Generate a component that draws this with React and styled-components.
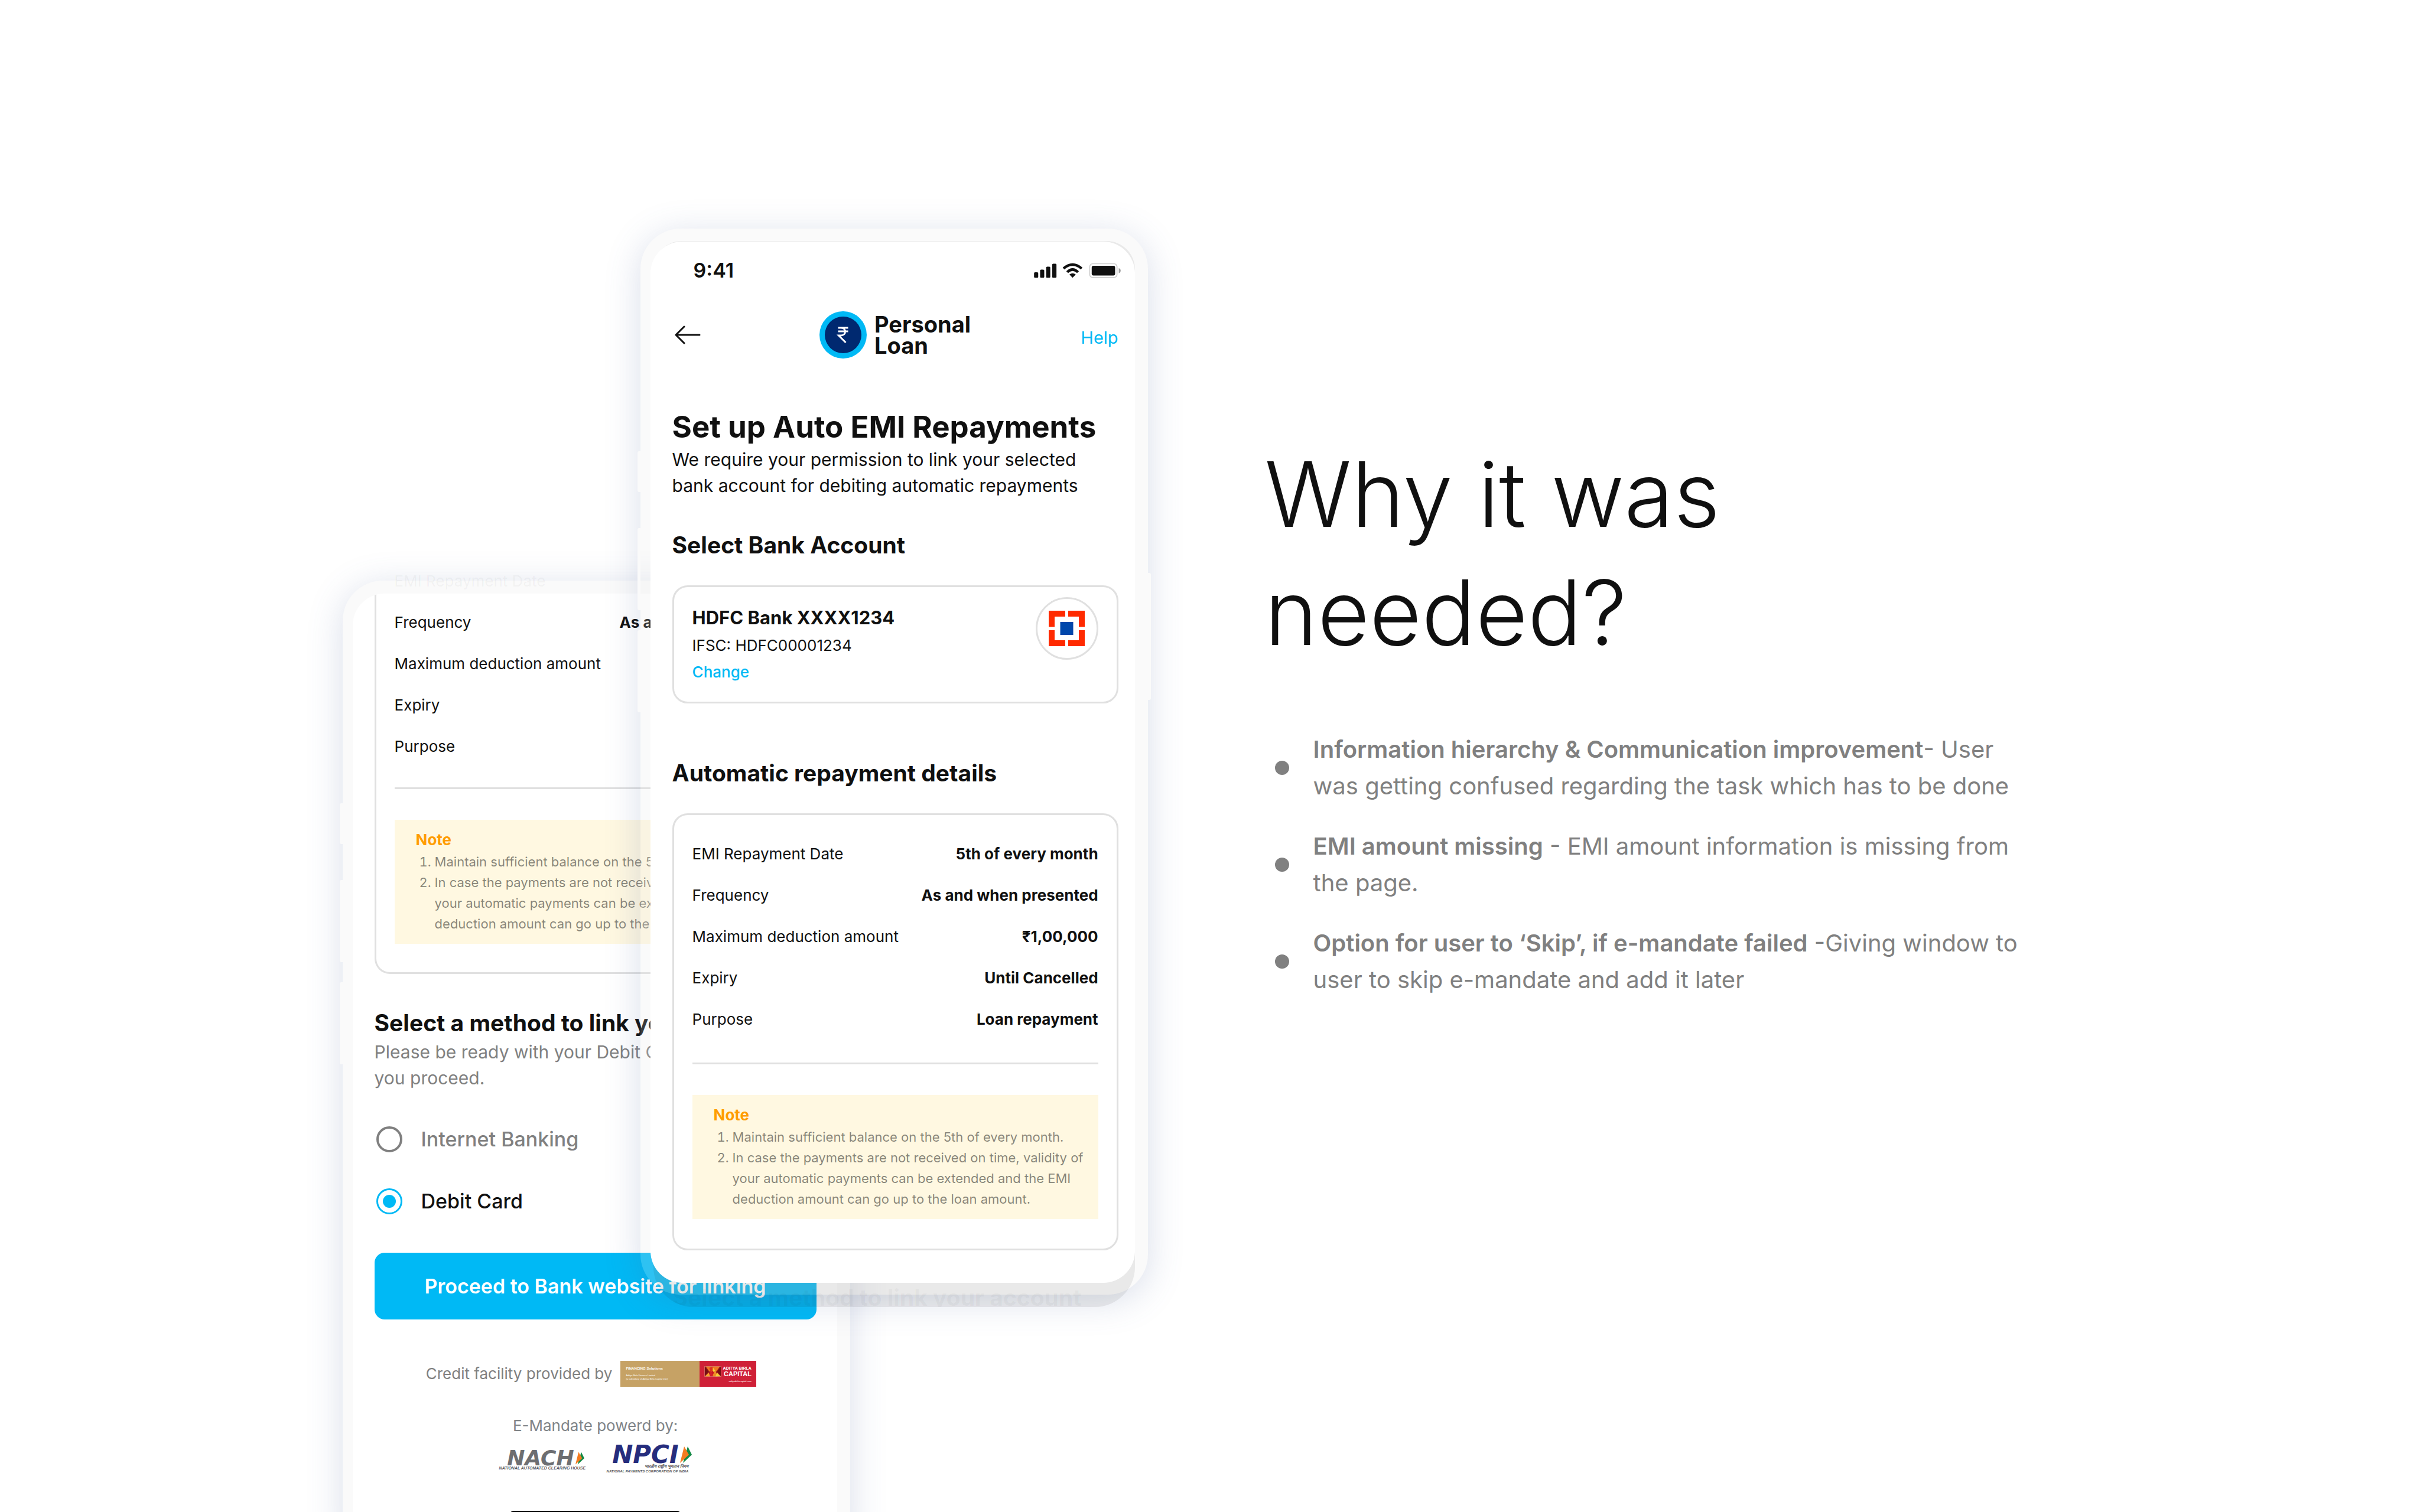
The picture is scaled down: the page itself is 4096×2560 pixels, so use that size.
import React from "react";
import styled, { createGlobalStyle } from "styled-components";

const ink = "#101010";
const grey = "#808080";
const sky = "#00b9f5";
const line = "#e0e0e0";

const Global = createGlobalStyle`
  *, *::before, *::after { box-sizing: border-box; }
  html, body { margin: 0; background: #fff; }
  body { font-family: Inter, "Liberation Sans", sans-serif; color: ${ink}; overflow: hidden; }
  h1, h2, h3, p, ul, ol { margin: 0; padding: 0; font-weight: inherit; }
`;

const Page = styled.main`
  display: flex;
  align-items: flex-start;
  height: 100vh;
  padding-left: 14.15vw;
  overflow: hidden;
`;

/* Phone shell */

const Phone = styled.section`
  position: relative;
  isolation: isolate;
  flex: none;
  width: 859px;
  margin-top: ${(p) => p.$top}px;
  margin-left: ${(p) => p.$shift || 0}px;
  padding: 22px 22px 20px 17px;
  border-radius: 68px;
  background: rgba(230, 230, 230, 0.2);
  box-shadow: 0 10px 60px rgba(80, 105, 160, 0.22);
`;

const SideKey = styled.span`
  position: absolute;
  ${(p) => (p.$right ? "left: 100%;" : "right: 100%;")}
  top: ${(p) => p.$top}px;
  width: 5px;
  height: ${(p) => p.$size}px;
  border-radius: ${(p) => (p.$right ? "0 3px 3px 0" : "3px 0 0 3px")};
  background: #fafafa;
`;

const Screen = styled.div`
  display: flex;
  flex-direction: column;
  padding: 0 ${(p) => p.$right}px 55px 37px;
  border-radius: 54px;
  background: #fff;
  overflow: hidden;
`;

const Underlay = styled.div`
  position: absolute;
  z-index: -1;
  inset: 21px 22px -21px;
  display: flex;
  align-items: flex-end;
  padding-left: 33px;
  border-radius: 48px 48px 68px 68px;
  background: rgba(16, 16, 16, 0.07);
  color: rgba(16, 16, 16, 0.05);
  overflow: hidden;
`;

const UnderlayTitle = styled.p`
  margin-bottom: -8px;
  font-size: 39px;
  font-weight: 700;
  line-height: 48px;
  white-space: nowrap;
`;

const GhostLabel = styled.span`
  position: absolute;
  z-index: -1;
  top: -24px;
  left: 88px;
  font-size: 26px;
  line-height: 50px;
  color: rgba(16, 16, 16, 0.05);
`;

/* Header */

const StatusBar = styled.div`
  display: flex;
  justify-content: space-between;
  align-items: center;
  margin: 29px -4px 49px 36px;
  font-size: 34px;
  font-weight: 600;
  line-height: 40px;
`;

const AppBar = styled.header`
  display: grid;
  grid-template-columns: 1fr auto 1fr;
  align-items: center;
  margin-bottom: 86px;
`;

const BackButton = styled.button`
  display: flex;
  justify-self: start;
  margin: 0;
  padding: 0 4px;
  border: 0;
  background: none;
  color: ${ink};
`;

const Brand = styled.div`
  display: flex;
  align-items: center;
  gap: 13px;
  font-size: 38px;
  font-weight: 700;
  line-height: 36px;
`;

const HelpLink = styled.a`
  justify-self: end;
  padding-top: 10px;
  font-size: 29px;
  line-height: 40px;
  color: ${sky};
  text-decoration: none;
`;

/* Text */

const Title = styled.h2`
  font-size: 51px;
  font-weight: 700;
  line-height: 60px;
  white-space: nowrap;
`;

const Lead = styled.p`
  margin-top: 3px;
  font-size: 30px;
  line-height: 44px;
  white-space: nowrap;
  color: ${(p) => (p.$muted ? grey : ink)};
`;

const Heading = styled.h3`
  margin-top: ${(p) => p.$top || 0}px;
  font-size: 39px;
  font-weight: 700;
  line-height: 48px;
  white-space: nowrap;
`;

/* Cards */

const Card = styled.div`
  margin-top: 44px;
  padding: 31px 31px 50px;
  border: 3px solid ${line};
  border-radius: 26px;
`;

const CutCard = styled(Card)`
  margin-top: 0;
  padding: 14px 31px 48px;
  border-top: 0;
  border-radius: 0 0 26px 26px;
`;

const AccountCard = styled(Card)`
  display: flex;
  justify-content: space-between;
  align-items: flex-start;
  padding: 17px 31px 29px;
`;

const Account = styled.div`
  padding-top: 12px;
  font-size: 26px;
`;

const BankName = styled.p`
  font-size: 31px;
  font-weight: 700;
  line-height: 46px;
`;

const Ifsc = styled.p`
  line-height: 48px;
`;

const ChangeLink = styled.a`
  display: block;
  font-weight: 500;
  line-height: 42px;
  color: ${sky};
  text-decoration: none;
`;

const BankBadge = styled.div`
  display: grid;
  place-items: center;
  width: 106px;
  height: 106px;
  border: 3px solid ${line};
  border-radius: 50%;
`;

const Details = styled.table`
  width: 100%;
  border-collapse: collapse;
  font-size: 26px;
  line-height: 70px;

  th, td { padding: 0; white-space: nowrap; }
  th { font-weight: 400; text-align: left; }
  td { font-weight: 700; text-align: right; }
`;

const Divider = styled.hr`
  width: 100%;
  height: 3px;
  margin: ${(p) => p.$top}px 0 52px;
  border: 0;
  background: ${line};
`;

const NoteBox = styled.aside`
  padding: 16px 0 16px 36px;
  background: #fff8e1;
`;

const NoteTitle = styled.p`
  margin-bottom: 2px;
  font-size: 26px;
  font-weight: 700;
  line-height: 36px;
  color: #ff9d00;
`;

const NoteList = styled.ol`
  padding-left: 32px;
  font-size: 22px;
  line-height: 35px;
  white-space: nowrap;
  color: rgba(16, 16, 16, 0.5);
`;

/* Payment method */

const Methods = styled.fieldset`
  display: grid;
  gap: 45px;
  margin: 52px 0 57px;
  padding: 0 3px;
  border: 0;
`;

const Method = styled.label`
  display: flex;
  align-items: center;
  gap: 32px;
  font-size: 34px;
  font-weight: 500;
  line-height: 60px;
  color: ${grey};

  &:has(:checked) { color: ${ink}; }
`;

const Radio = styled.input`
  appearance: none;
  display: grid;
  place-items: center;
  width: 44px;
  height: 44px;
  margin: 0;
  border: 4px solid ${grey};
  border-radius: 50%;

  &:checked { border: 3px solid ${sky}; }
  &:checked::before {
    content: "";
    width: 22px;
    height: 22px;
    border-radius: 50%;
    background: ${sky};
  }
`;

const Proceed = styled.button`
  height: 113px;
  border: 0;
  border-radius: 17px;
  background: ${sky};
  color: #fff;
  font: 600 34px/60px Inter, "Liberation Sans", sans-serif;
`;

/* Partners */

const Credit = styled.div`
  display: flex;
  justify-content: center;
  gap: 14px;
  margin-top: 70px;
  padding-right: 14px;
  font-size: 26px;
  line-height: 44px;
  color: ${grey};
`;

const Banner = styled.div`
  display: grid;
  grid-template-columns: 134px 96px;
  height: 44px;
  font-family: "Liberation Sans Narrow", "Liberation Sans", sans-serif;
  color: #fff;
  white-space: nowrap;
`;

const Gold = styled.div`
  padding: 9px 9px 0;
  background: #c6a265;
  font-size: 4px;
  line-height: 6px;

  b { display: block; margin-bottom: 4px; font-size: 6px; line-height: 9px; }
`;

const Crimson = styled.div`
  display: flex;
  gap: 2px;
  padding: 9px 8px 0;
  background: #cf2037;
  font-size: 4px;
  text-align: right;

  b { display: block; font-size: 7px; line-height: 7px; }
  strong { display: block; font-size: 11px; line-height: 12px; }
  span { display: block; line-height: 13px; }
`;

const Powered = styled.p`
  margin-top: 44px;
  font-size: 26px;
  line-height: 44px;
  text-align: center;
  color: #808488;
`;

const Logos = styled.div`
  display: flex;
  justify-content: center;
  align-items: flex-start;
  gap: 38px;
  margin-top: 11px;
`;

const Wordmark = styled.div`
  width: 144px;
  padding-top: ${(p) => p.$drop}px;
  color: #55565a;
  white-space: nowrap;
`;

const WordmarkName = styled.div`
  display: flex;
  align-items: center;
  justify-content: flex-end;
  gap: 2px;
  font: italic 700 ${(p) => p.$size}px/${(p) => p.$lh}px "DejaVu Sans", sans-serif;
  color: ${(p) => p.$color};
`;

const Tagline = styled.div`
  padding-right: 6px;
  font: italic 700 ${(p) => p.$size}px/8px "Liberation Sans Narrow", "Liberation Sans", sans-serif;
  text-align: ${(p) => p.$align || "left"};
`;

const HomeBar = styled.div`
  align-self: center;
  width: 289px;
  height: 12px;
  margin-top: 63px;
  border-radius: 6px;
  background: #000;
`;

/* Copy column */

const Copy = styled.article`
  flex: 1;
  min-width: 0;
  margin: 737px 0 0 198px;
`;

const Question = styled.h1`
  font-size: 152px;
  font-weight: 300;
  line-height: 200px;
`;

const Reasons = styled.ul`
  display: grid;
  gap: 40px;
  margin-top: 101px;
  padding-left: 17px;
  list-style: none;
  font-size: 40px;
  line-height: 62px;
  color: ${grey};
`;

const Reason = styled.li`
  display: flex;
  align-items: center;
  gap: 41px;
  white-space: nowrap;

  &::before {
    content: "";
    flex: none;
    width: 24px;
    height: 24px;
    border-radius: 50%;
    background: ${grey};
  }
  b { font-weight: 600; }
`;

const StatusIcons = () => (
  <svg width="147" height="26" viewBox="258 110 690 122" aria-hidden="true">
    <g fill={ink}>
      <rect x="259" y="185" width="33" height="44" rx="8" />
      <rect x="307" y="164" width="33" height="65" rx="8" />
      <rect x="355" y="141" width="33" height="88" rx="8" />
      <rect x="403" y="117" width="34" height="112" rx="8" />
      <path d="M540 203Q565 184 590 203L565 229Z" />
      <rect x="717" y="133" width="186" height="78" rx="14" />
    </g>
    <g fill="none" stroke={ink} strokeWidth="21">
      <path d="M493 155Q565 93 637 155" />
      <path d="M522 184Q565 142 608 184" />
    </g>
    <rect x="701" y="117" width="217" height="110" rx="24" fill="none" stroke="#cfcfcf" strokeWidth="8" />
    <path d="M932 152Q947 157 947 172T932 193Z" fill="#a0a0a0" />
  </svg>
);

const Arrow = () => (
  <svg width="44" height="32" viewBox="0 0 44 32" fill="none" stroke="currentColor" strokeWidth="3" strokeLinecap="round" strokeLinejoin="round">
    <path d="M42 16H2M16 2L2 16L16 30" />
  </svg>
);

const RupeeCoin = () => (
  <svg width="80" height="80" viewBox="0 0 80 80" aria-hidden="true">
    <circle cx="40" cy="40" r="40" fill={sky} />
    <circle cx="40" cy="40" r="31" fill="#002970" />
    <path d="M31.500 28H48.500M31.500 34H48.500M36 28C46 28 46 41 36 41H32.500L44.500 53" fill="none" stroke="#fff" strokeWidth="3" />
  </svg>
);

const HdfcMark = () => (
  <svg width="61" height="60" viewBox="0 0 61 60" aria-hidden="true">
    <g fill="#ff2a00">
      <path d="M0 0H28V10H10V27.500H0Z" />
      <path d="M33 0H61V27.500H51V10H33Z" />
      <path d="M0 33H10V50H28V60H0Z" />
      <path d="M51 33H61V60H33V50H51Z" />
    </g>
    <rect x="19.500" y="19" width="22" height="22" fill="#0047ab" />
  </svg>
);

const SunMark = () => (
  <svg width="29" height="18" viewBox="0 0 56 36" aria-hidden="true">
    <rect width="56" height="36" fill="#9c1a1c" />
    <path d="M4 1H52L40 18H16Z" fill="#ee7a22" />
    <path d="M16 6L28 1V14L20 18Z" fill="#d9341f" />
    <path d="M28 4L38 18L28 20Z" fill="#f7d038" />
    <path d="M28 20L20 16L12 35H28Z" fill="#d21f2c" />
    <path d="M28 20L38 18L44 35H28Z" fill="#ee8a25" />
    <path d="M1 35L14 22L19 35Z" fill="#f7a52c" />
    <path d="M55 35L42 22L37 35Z" fill="#f7d038" />
    <path d="M1 2L13 18L1 33ZM55 2L43 18L55 33Z" fill="#741012" />
    <path d="M26 14L32 22L28 30L24 22Z" fill="#c9181f" />
    <rect x="0.500" y="0.500" width="55" height="35" fill="none" stroke="#f0a090" />
  </svg>
);

const Flag = ({ h }) => (
  <svg width={Math.round(h * 0.7)} height={h} viewBox="0 0 20 28" aria-hidden="true">
    <path d="M13 0L20 14L5 28Z" fill="#138a45" />
    <path d="M7 0L15 14L0 28Z" fill="#f47b20" />
  </svg>
);

const Keys = () => (
  <>
    <SideKey $top={377} $size={69} />
    <SideKey $top={507} $size={139} />
    <SideKey $top={680} $size={139} />
    <SideKey $right $top={583} $size={215} />
  </>
);

const DetailTable = ({ rows }) => (
  <Details>
    <tbody>
      {rows.map(([name, value]) => (
        <tr key={name}>
          <th scope="row">{name}</th>
          <td>{value}</td>
        </tr>
      ))}
    </tbody>
  </Details>
);

const Note = () => (
  <NoteBox>
    <NoteTitle>Note</NoteTitle>
    <NoteList>
      <li>Maintain sufficient balance on the 5th of every month.</li>
      <li>
        In case the payments are not received on time, validity of
        <br />
        your automatic payments can be extended and the EMI
        <br />
        deduction amount can go up to the loan amount.
      </li>
    </NoteList>
  </NoteBox>
);

const details = [
  ["EMI Repayment Date", "5th of every month"],
  ["Frequency", "As and when presented"],
  ["Maximum deduction amount", "₹1,00,000"],
  ["Expiry", "Until Cancelled"],
  ["Purpose", "Loan repayment"],
];

const MethodPhone = () => (
  <Phone $top={983}>
    <Keys />
    <GhostLabel>{details[0][0]}</GhostLabel>
    <Screen $right={35}>
      <CutCard>
        <DetailTable rows={details.slice(1)} />
        <Divider $top={34} />
        <Note />
      </CutCard>
      <Heading $top={59}>Select a method to link your account</Heading>
      <Lead $muted>
        Please be ready with your Debit Card before
        <br />
        you proceed.
      </Lead>
      <Methods>
        <Method>
          <Radio type="radio" name="method" />
          Internet Banking
        </Method>
        <Method>
          <Radio type="radio" name="method" defaultChecked />
          Debit Card
        </Method>
      </Methods>
      <Proceed type="button">Proceed to Bank website for linking</Proceed>
      <Credit>
        Credit facility provided by
        <Banner>
          <Gold>
            <b>FINANCING Solutions</b>
            Aditya Birla Finance Limited
            <br />
            (a subsidiary of Aditya Birla Capital Ltd.)
          </Gold>
          <Crimson>
            <SunMark />
            <div>
              <b>ADITYA BIRLA</b>
              <strong>CAPITAL</strong>
              <span>adityabirlacapital.com</span>
            </div>
          </Crimson>
        </Banner>
      </Credit>
      <Powered>E-Mandate powerd by:</Powered>
      <Logos>
        <Wordmark $drop={9}>
          <WordmarkName $size={36} $lh={26} $color="#6d6e71">
            NACH
            <Flag h={22} />
          </WordmarkName>
          <Tagline $size={7}>NATIONAL AUTOMATED CLEARING HOUSE</Tagline>
        </Wordmark>
        <Wordmark $drop={0}>
          <WordmarkName $size={42} $lh={32} $color="#262d7d">
            NPCI
            <Flag h={28} />
          </WordmarkName>
          <Tagline $size={7} $align="right">भारतीय राष्ट्रीय भुगतान निगम</Tagline>
          <Tagline $size={6}>NATIONAL PAYMENTS CORPORATION OF INDIA</Tagline>
        </Wordmark>
      </Logos>
      <HomeBar />
    </Screen>
  </Phone>
);

const SetupPhone = () => (
  <Phone $top={387} $shift={-355}>
    <Keys />
    <Underlay>
      <UnderlayTitle>Select a method to link your account</UnderlayTitle>
    </Underlay>
    <Screen $right={28}>
      <StatusBar>
        9:41
        <StatusIcons />
      </StatusBar>
      <AppBar>
        <BackButton type="button" aria-label="Back">
          <Arrow />
        </BackButton>
        <Brand>
          <RupeeCoin />
          <span>
            Personal
            <br />
            Loan
          </span>
        </Brand>
        <HelpLink href="#help">Help</HelpLink>
      </AppBar>
      <Title>Set up Auto EMI Repayments</Title>
      <Lead>
        We require your permission to link your selected
        <br />
        bank account for debiting automatic repayments
      </Lead>
      <Heading $top={55}>Select Bank Account</Heading>
      <AccountCard>
        <Account>
          <BankName>HDFC Bank XXXX1234</BankName>
          <Ifsc>IFSC: HDFC00001234</Ifsc>
          <ChangeLink href="#change">Change</ChangeLink>
        </Account>
        <BankBadge>
          <HdfcMark />
        </BankBadge>
      </AccountCard>
      <Heading $top={94}>Automatic repayment details</Heading>
      <Card>
        <DetailTable rows={details} />
        <Divider $top={38} />
        <Note />
      </Card>
    </Screen>
  </Phone>
);

export default function App() {
  return (
    <>
      <Global />
      <Page>
        <MethodPhone />
        <SetupPhone />
        <Copy>
          <Question>
            Why it was
            <br />
            needed?
          </Question>
          <Reasons>
            <Reason>
              <p>
                <b>Information hierarchy &amp; Communication improvement</b>- User
                <br />
                was getting confused regarding the task which has to be done
              </p>
            </Reason>
            <Reason>
              <p>
                <b>EMI amount missing</b> - EMI amount information is missing from
                <br />
                the page.
              </p>
            </Reason>
            <Reason>
              <p>
                <b>Option for user to ‘Skip’, if e-mandate failed</b> -Giving window to
                <br />
                user to skip e-mandate and add it later
              </p>
            </Reason>
          </Reasons>
        </Copy>
      </Page>
    </>
  );
}
